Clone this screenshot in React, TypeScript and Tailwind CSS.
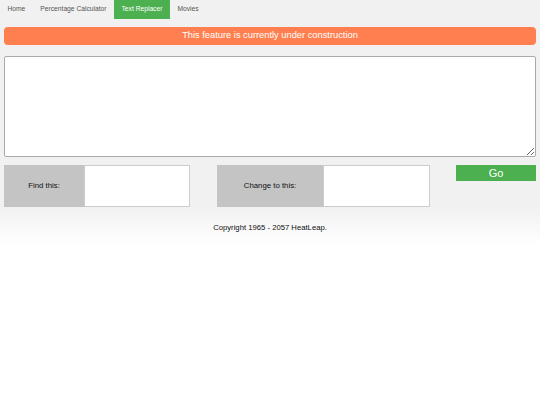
export default function App() {
    const tabs = ['Home', 'Percentage Calculator', 'Text Replacer', 'Movies'];

    return (
        <div className="min-h-screen bg-white font-['Liberation_Sans',Arial,sans-serif]">
            <div className="bg-[#f1f1f1]">
                <nav className="flex h-[19px]">
                    {tabs.map((tab) => (
                        <a
                            key={tab}
                            className={
                                tab === 'Text Replacer'
                                    ? 'flex items-center px-[7.5px] text-[6.7px] bg-[#4caf50] text-white'
                                    : 'flex items-center px-[7.5px] text-[6.7px] text-[#555]'
                            }
                        >
                            {tab}
                        </a>
                    ))}
                </nav>

                <div className="px-[4px]">
                    <div className="mt-[8px] h-[18px] rounded-[4px] bg-[#ff7f50] flex items-center justify-center text-[9.3px] text-white">
                        This feature is currently under construction
                    </div>

                    <textarea className="mt-[11px] block w-full h-[101px] bg-white border border-[#aaa] rounded-[2px] outline-none" />

                    <div className="mt-[8px] flex items-start">
                        <div className="flex h-[42px]">
                            <div className="w-[80px] bg-[#c4c4c4] flex items-center justify-center text-[7.8px] text-[#111]">
                                Find this:
                            </div>
                            <input className="w-[106px] bg-white border border-[#ccc] outline-none" />
                        </div>
                        <div className="ml-[27px] flex h-[42px]">
                            <div className="w-[106px] bg-[#c4c4c4] flex items-center justify-center text-[7.8px] text-[#111]">
                                Change to this:
                            </div>
                            <input className="w-[107px] bg-white border border-[#ccc] outline-none" />
                        </div>
                        <button className="ml-auto w-[80px] h-[16px] bg-[#4caf50] text-white text-[11px] flex items-center justify-center">
                            Go
                        </button>
                    </div>
                </div>
            </div>

            <footer className="h-[38px] pt-[4px] bg-gradient-to-b from-[#f1f1f1] to-white flex items-center justify-center text-[7.7px] text-[#111]">
                Copyright 1965 - 2057 HeatLeap.
            </footer>
        </div>
    );
}
